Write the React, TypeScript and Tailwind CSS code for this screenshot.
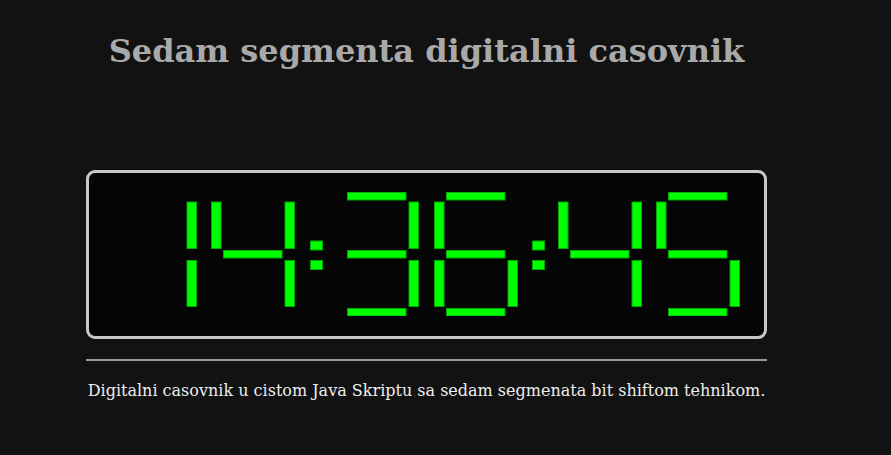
import React from "react";

const SEG: Record<string, [number, number, number, number]> = {
  a: [12.5, 0.5, 58.5, 7.5],
  b: [74, 10, 9.5, 46.5],
  c: [74, 68.5, 9.5, 46],
  d: [12.5, 116.5, 58.5, 7.5],
  e: [0.5, 68.5, 9.5, 46],
  f: [0.5, 10, 9.5, 46.5],
  g: [12.5, 58.5, 58.5, 7.5],
};

const DIGITS: Record<string, string> = {
  "0": "abcdef",
  "1": "bc",
  "2": "abged",
  "3": "abgcd",
  "4": "fgbc",
  "5": "afgcd",
  "6": "afgecd",
  "7": "abc",
  "8": "abcdefg",
  "9": "abcdfg",
};

function Digit({ d }: { d: string }) {
  const on = DIGITS[d];
  return (
    <svg width="84" height="124" viewBox="0 0 84 124" className="block shrink-0">
      {on.split("").map((k) => {
        const [x, y, w, h] = SEG[k];
        return <rect key={k} x={x} y={y} width={w} height={h} fill="#00ff00" stroke="#00a800" strokeWidth="1" />;
      })}
    </svg>
  );
}

function Colon() {
  return (
    <svg width="13" height="124" viewBox="0 0 13 124" className="block shrink-0 -mr-[2px]">
      <rect x="0.5" y="49" width="12" height="9" fill="#00ff00" stroke="#00a800" strokeWidth="1" />
      <rect x="0.5" y="68.5" width="12" height="9" fill="#00ff00" stroke="#00a800" strokeWidth="1" />
    </svg>
  );
}

export default function App() {
  const time = "14:36:45";
  return (
    <div className="min-h-screen bg-[#121212]" style={{ fontFamily: '"DejaVu Serif", serif' }}>
      <div className="w-[681px] ml-[86px] pt-[31px]">
        <h1 className="text-center text-[32px] leading-[40px] font-bold text-[#a9a9a9]">
          Sedam segmenta digitalni casovnik
        </h1>
        <div className="mt-[99px] h-[169px] rounded-[9px] border-[3px] border-[#c8c8c8] bg-[#050505] flex items-start pl-[23.5px] pt-[18.5px] gap-[14.5px]">
          {time.split("").map((c, i) => (c === ":" ? <Colon key={i} /> : <Digit key={i} d={c} />))}
        </div>
        <div className="mt-[20px] h-[2px] bg-[#9a9a9a]" />
        <p className="mt-[18px] text-center text-[16px] leading-[24px] text-[#eeeeee]">
          Digitalni casovnik u cistom Java Skriptu sa sedam segmenata bit shiftom tehnikom.
        </p>
      </div>
    </div>
  );
}
